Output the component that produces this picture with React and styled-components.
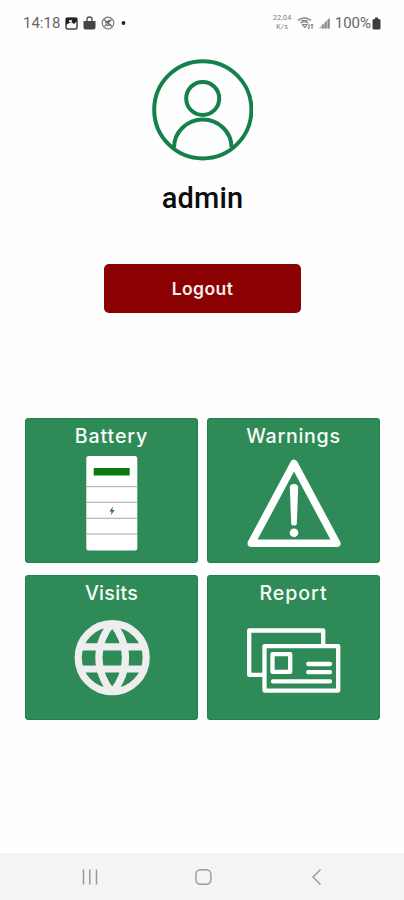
import React from "react";
import styled, { createGlobalStyle } from "styled-components";

const GlobalStyle = createGlobalStyle`
  * {
    box-sizing: border-box;
  }
  body {
    margin: 0;
    background: #fefefe;
  }
`;

const Screen = styled.div`
  width: 404px;
  height: 900px;
  display: flex;
  flex-direction: column;
  overflow: hidden;
  background: #fefefe;
  font-family: Inter, "Liberation Sans", sans-serif;
`;

const StatusBar = styled.header`
  height: 46px;
  flex-shrink: 0;
  padding: 0 23px;
  display: flex;
  align-items: center;
  justify-content: space-between;
  color: #666;
  font-family: Roboto, sans-serif;
`;

const StatusGroup = styled.div`
  display: flex;
  align-items: center;
  gap: ${(props) => props.$gap}px;
`;

const StatusText = styled.span`
  font-size: 15px;
  line-height: 18px;
`;

const NetSpeed = styled.div`
  width: 21px;
  display: flex;
  flex-direction: column;
  align-items: center;
  font-size: 7px;
  line-height: 9px;
  letter-spacing: 0.3px;
  color: #777;
`;

const Profile = styled.section`
  display: flex;
  flex-direction: column;
  align-items: center;
  padding-top: 13px;
`;

const UserName = styled.h1`
  margin: 20px 0 0 1px;
  font-family: Roboto, sans-serif;
  font-size: 29px;
  font-weight: 500;
  line-height: 34px;
  letter-spacing: 0.1px;
  color: #0c0c0c;
`;

const LogoutButton = styled.button`
  width: 197px;
  height: 49px;
  margin: 49px 0 0 1px;
  padding: 0;
  border: 0;
  border-radius: 5px;
  background: #8b0000;
  color: #f6eeee;
  font-family: inherit;
  font-size: 17.5px;
  font-weight: 600;
  letter-spacing: 0.4px;
`;

const Menu = styled.main`
  display: grid;
  grid-template-columns: 173px 173px;
  grid-auto-rows: 145px;
  gap: 12px 9px;
  margin: 104.5px 0 0 25px;
`;

const Card = styled.div`
  display: flex;
  flex-direction: column;
  align-items: center;
  border-radius: 4px;
  background: #2e8b57;
  box-shadow: inset 0 0 0 1px #23824c;
`;

const CardTitle = styled.h2`
  height: 36px;
  margin: 0;
  font-size: 19.6px;
  font-weight: 500;
  line-height: 37px;
  letter-spacing: ${(props) => props.$spacing || 0}px;
  color: #f8fcf9;
`;

const NavBar = styled.nav`
  height: 47px;
  flex-shrink: 0;
  margin-top: auto;
  padding: 1px 78px 0 80px;
  display: flex;
  align-items: center;
  justify-content: space-between;
  background: #f4f4f4;
`;

const Icon = ({ w, h, children }) => (
  <svg width={w} height={h} viewBox={`0 0 ${w} ${h}`} fill="none">
    {children}
  </svg>
);

const AvatarIcon = () => (
  <svg width="102" height="102" viewBox="0 0 102 102" fill="none" stroke="#15814a" strokeWidth="4">
    <circle cx="51.8" cy="50.8" r="48.6" />
    <circle cx="51.7" cy="39.4" r="16.5" />
    <path d="M23 88.500a28.800 28 0 0 1 57.600 0" />
  </svg>
);

const BatteryIcon = () => (
  <Icon w={173} h={109}>
    <rect x="61.3" y="2" width="51" height="94.6" rx="2.5" fill="#fff" />
    <rect x="68.7" y="14" width="36" height="7.5" fill="#0b7a12" />
    <path d="M61.3 32.7h51M61.3 48.3h51M61.3 64.3h51M61.3 80h51" stroke="#a3aaa6" />
    <path d="M88.2 52.2l-3.8 5.2h2.3l-1 4.2 3.9-5.5h-2.4z" fill="#1f7a2c" />
  </Icon>
);

const WarningIcon = () => (
  <Icon w={173} h={109}>
    <path d="M87 9.500L129.700 89.3H44.300z" stroke="#fff" strokeWidth="7.600" strokeLinejoin="round" />
    <path d="M82.8 33.5a4.2 3.6 0 0 1 8.4 0L89.8 69.5a2.8 2 0 0 1-5.6 0z" fill="#fff" />
    <circle cx="87" cy="78.7" r="4.3" fill="#fff" />
  </Icon>
);

// the meridians meet in a point at both poles
const GlobeIcon = () => (
  <Icon w={173} h={109}>
    <g stroke="#eee" strokeWidth="7.2">
      <circle cx="87.2" cy="46.7" r="34" />
      <path d="M87.200 12C69.500 33 69.500 60.400 87.200 81.400M87.200 12C104.900 33 104.900 60.400 87.200 81.400" />
      <path d="M55.5 35.8h63.4M55.5 58h63.4" />
    </g>
  </Icon>
);

const ReportIcon = () => (
  <Icon w={173} h={109}>
    <g stroke="#fff" strokeWidth="4.3" strokeLinejoin="round">
      <path d="M57.5 63.9H42.2V19.5h74V34" />
      <rect x="57.5" y="35.2" width="73.7" height="44.4" />
      <rect x="65.5" y="43.2" width="17.7" height="17.7" />
      <path d="M101.2 53h21.8M101.2 61.2h21.8M66 70.4h57" strokeLinecap="round" />
    </g>
  </Icon>
);

const cards = [
  { title: "Battery", icon: <BatteryIcon />, spacing: 0.9 },
  { title: "Warnings", icon: <WarningIcon />, spacing: 0.7 },
  { title: "Visits", icon: <GlobeIcon />, spacing: 0.3 },
  { title: "Report", icon: <ReportIcon />, spacing: 0.95 },
];

const App = () => {
  return (
    <>
      <GlobalStyle />
      <Screen>
        <StatusBar>
          <StatusGroup $gap={5}>
            <StatusText>14:18</StatusText>
            <Icon w={13} h={13}>
              <rect x="1" y="1" width="11" height="11" rx="1.5" stroke="#444" strokeWidth="1.5" />
              <path d="M1 1h11v3L9 7 6 5 1 8z" fill="#222" />
              <path d="M4 3h3v2H4z" fill="#ddd" />
            </Icon>
            <Icon w={13} h={14}>
              <path d="M4 5V3.5a2.5 2.5 0 0 1 5 0V5" stroke="#555" strokeWidth="1.4" />
              <path d="M.5 5h12v6.500q0 2-2 2h-8q-2 0-2-2z" fill="#444" />
            </Icon>
            <Icon w={14} h={14}>
              <circle cx="7" cy="7" r="5.8" stroke="#777" strokeWidth="1.2" />
              <path d="M3 3.500l8 7M10.500 3.500l-7 7M4 7l5-3M6 10l4-2" stroke="#666" strokeWidth="1.100" />
            </Icon>
            <Icon w={8} h={6}>
              <circle cx="3.5" cy="3" r="1.9" fill="#222" />
            </Icon>
          </StatusGroup>
          <StatusGroup $gap={4}>
            <NetSpeed>
              <span>22,04</span>
              <span>K/s</span>
            </NetSpeed>
            <Icon w={17} h={14}>
              <path d="M1 4.500q6.500-5 13 0M3.500 7q4-3 8 0" stroke="#999" strokeWidth="1.800" />
              <path d="M4.500 4.500h6M5.500 8.500l2.500 3 2-3z" stroke="#888" strokeWidth="1.200" />
              <path d="M12 8v5M10.500 11.500l1.500 1.500M15 13V8M13.700 9.500L15 8l1.300 1.500" stroke="#777" />
            </Icon>
            <Icon w={13} h={12}>
              <path d="M12 .5v11H.5z" fill="#bbb" />
              <path d="M5 7.200V11.500M7.700 4.800V11.500M10.700 2V11.500" stroke="#888" strokeWidth="1.500" />
            </Icon>
            <StatusGroup $gap={1}>
              <StatusText>100%</StatusText>
              <Icon w={9} h={13}>
                <path d="M3 .5h3V2h1q1.500 0 1.500 1.500v7.500q0 1.500-1.500 1.500H2q-1.500 0-1.500-1.500V3.500Q.5 2 2 2h1z" fill="#3c3c3c" />
              </Icon>
            </StatusGroup>
          </StatusGroup>
        </StatusBar>

        <Profile>
          <AvatarIcon />
          <UserName>admin</UserName>
          <LogoutButton type="button">Logout</LogoutButton>
        </Profile>

        <Menu>
          {cards.map((card) => (
            <Card key={card.title}>
              <CardTitle $spacing={card.spacing}>{card.title}</CardTitle>
              {card.icon}
            </Card>
          ))}
        </Menu>

        <NavBar>
          <Icon w={20} h={18}>
            <path d="M3.500 1.500v15M9.800 1.500v15M16.500 1.500v15" stroke="#999" strokeWidth="1.500" />
          </Icon>
          <Icon w={20} h={18}>
            <rect x="0.900" y="1.700" width="15" height="14.600" rx="4.800" stroke="#999" strokeWidth="1.400" />
          </Icon>
          <Icon w={16} h={18}>
            <path d="M10.500 1.500L3 9l7.500 7.500" stroke="#999" strokeWidth="1.400" />
          </Icon>
        </NavBar>
      </Screen>
    </>
  );
};

export default App;
